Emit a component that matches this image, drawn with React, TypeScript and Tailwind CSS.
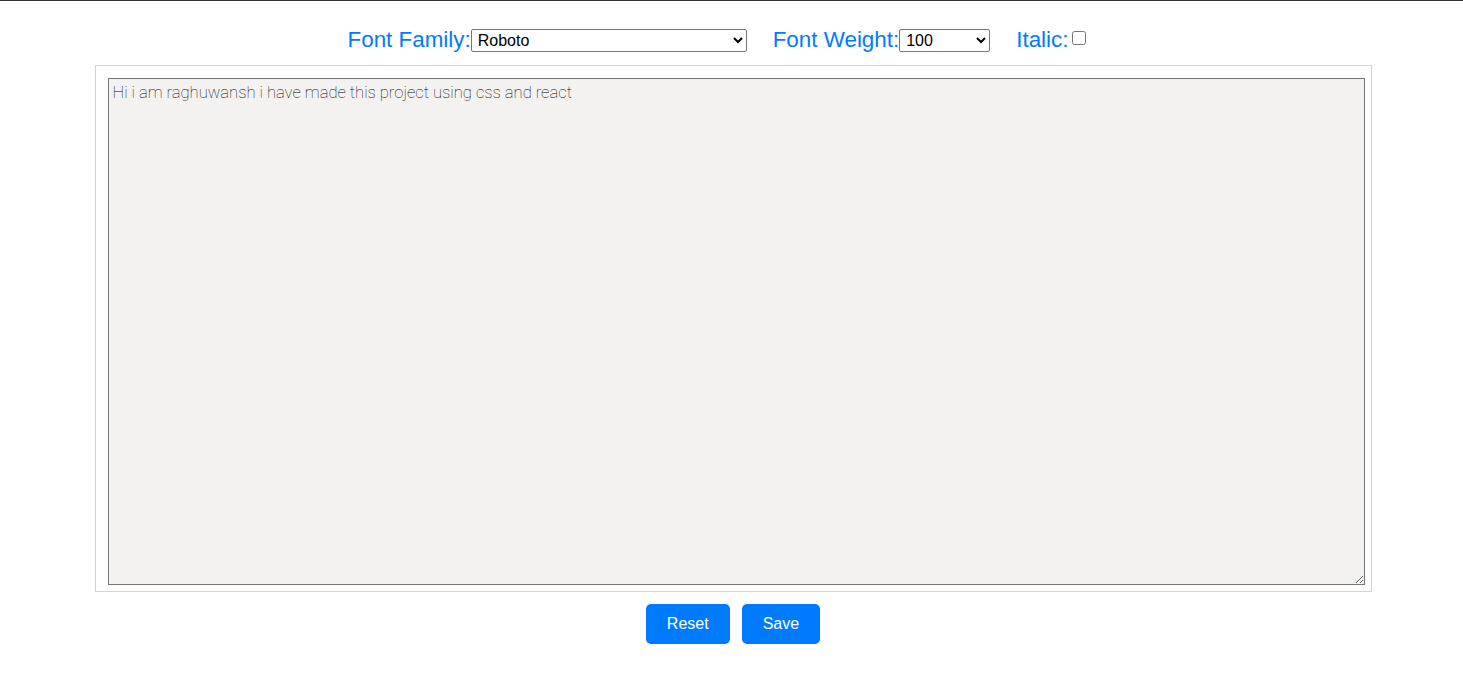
import { useState } from 'react'

export default function App() {
  const [text, setText] = useState('Hi i am raghuwansh i have made this project using css and react')
  const [family, setFamily] = useState('Roboto')
  const [weight, setWeight] = useState('100')
  const [italic, setItalic] = useState(false)

  return (
    <div className="min-h-screen bg-white border-t border-[#333] pl-[3px]" style={{ fontFamily: '"Liberation Sans", Arial, sans-serif' }}>
      <div className="flex justify-center items-center pt-[14px] pr-[6px] h-[64px]">
        <div className="flex items-center mr-[26px]">
          <label className="text-[22.4px] text-[#007bff] leading-none">Font Family:</label>
          <select
            value={family}
            onChange={(e) => setFamily(e.target.value)}
            className="w-[276px] h-[23px] text-[16px] text-black border border-[#767676] rounded-[2px] bg-white pl-[2px]"
          >
            <option>Roboto</option>
            <option>Open Sans</option>
            <option>Lato</option>
          </select>
        </div>
        <div className="flex items-center mr-[26px]">
          <label className="text-[22.4px] text-[#007bff] leading-none">Font Weight:</label>
          <select
            value={weight}
            onChange={(e) => setWeight(e.target.value)}
            className="w-[91px] h-[23px] text-[16px] text-black border border-[#767676] rounded-[2px] bg-white pl-[2px]"
          >
            <option>100</option>
            <option>300</option>
            <option>400</option>
            <option>700</option>
          </select>
        </div>
        <div className="flex items-center mr-[26px]">
          <label className="text-[22.4px] text-[#007bff] leading-none">Italic:</label>
          <input
            type="checkbox"
            checked={italic}
            onChange={(e) => setItalic(e.target.checked)}
            className="ml-[4px] w-[14px] h-[14px] -mt-[4px]"
          />
        </div>
      </div>

      <div className="mx-auto w-[1277px] border border-[#d3d3d3] pt-[12px] pl-[12px] pr-[6px] pb-[6px]">
        <textarea
          value={text}
          onChange={(e) => setText(e.target.value)}
          className="block w-[1257px] h-[507px] bg-[#f3f2f1] border border-[#767676] px-[4px] py-[2px] text-[16.6px] text-black resize outline-none"
          style={{ fontFamily: `${family}, sans-serif`, fontWeight: Number(weight), fontStyle: italic ? 'italic' : 'normal' }}
        />
      </div>

      <div className="flex justify-center gap-[12px] mt-[12px]">
        <button
          onClick={() => setText('')}
          className="h-[40px] px-[21px] bg-[#007bff] text-white text-[16px] rounded-[5px]"
        >
          Reset
        </button>
        <button className="h-[40px] px-[21px] bg-[#007bff] text-white text-[16px] rounded-[5px]">
          Save
        </button>
      </div>
    </div>
  )
}
